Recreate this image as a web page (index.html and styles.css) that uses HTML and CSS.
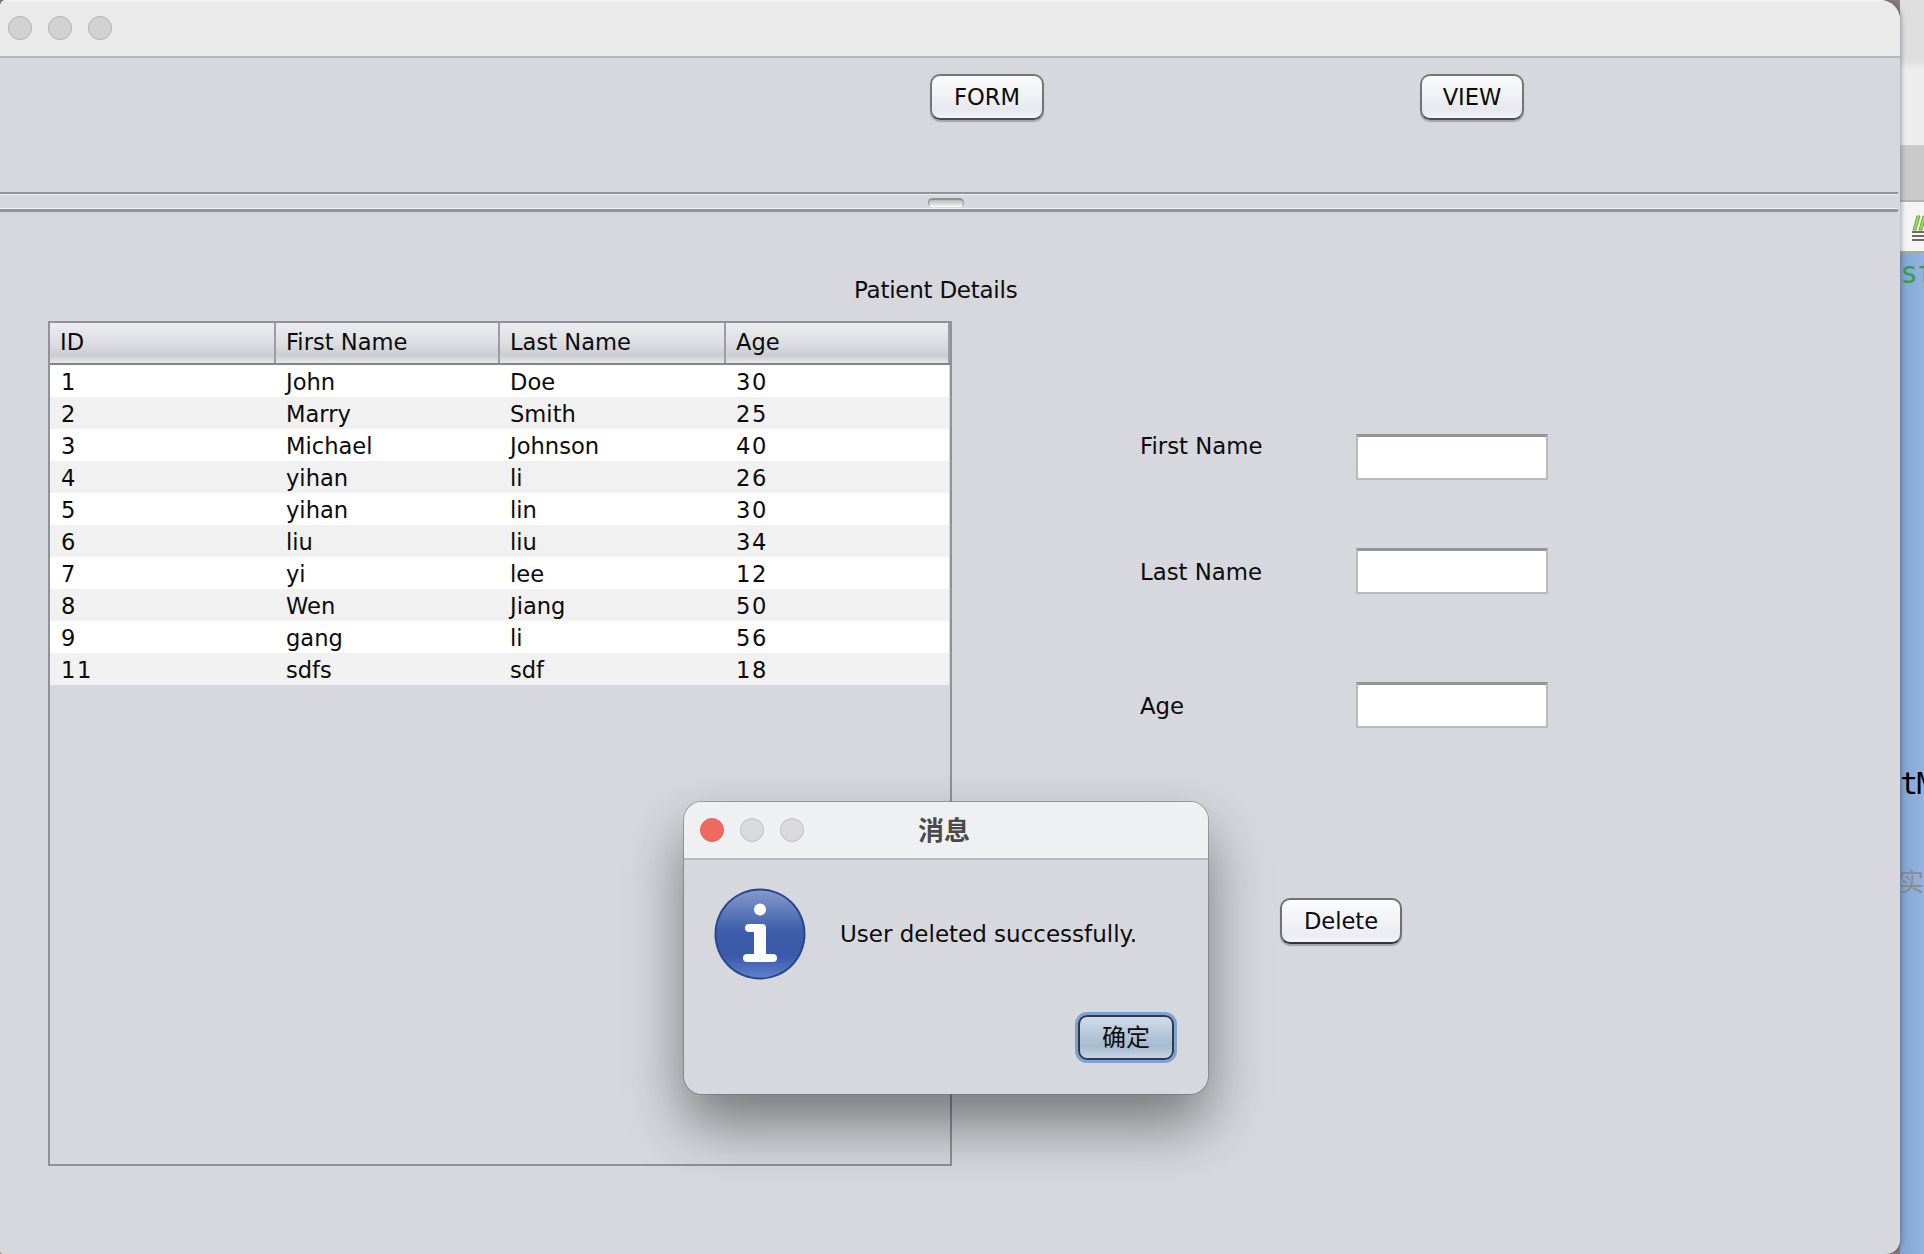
FILE: index.html
```html
<!DOCTYPE html>
<html lang="en">
<head>
<meta charset="utf-8">
<title>Patient Details</title>
<link rel="stylesheet" href="styles.css">
</head>
<body>
<div class="screen">
  <main class="window">
    <header class="titlebar">
      <span class="light"></span><span class="light"></span><span class="light"></span>
    </header>
    <nav class="toolbar">
      <button class="btn btn-form">FORM</button>
      <button class="btn btn-view">VIEW</button>
    </nav>
    <div class="splitter"><span class="grip"></span></div>
    <section class="panel">
      <h1 class="panel-title">Patient Details</h1>
      <div class="panel-body">
        <div class="table-wrap">
          <table class="data">
            <thead><tr><th>ID</th><th>First Name</th><th>Last Name</th><th>Age</th></tr></thead>
            <tbody>
              <tr><td>1</td><td>John</td><td>Doe</td><td class="num">30</td></tr>
              <tr><td>2</td><td>Marry</td><td>Smith</td><td class="num">25</td></tr>
              <tr><td>3</td><td>Michael</td><td>Johnson</td><td class="num">40</td></tr>
              <tr><td>4</td><td>yihan</td><td>li</td><td class="num">26</td></tr>
              <tr><td>5</td><td>yihan</td><td>lin</td><td class="num">30</td></tr>
              <tr><td>6</td><td>liu</td><td>liu</td><td class="num">34</td></tr>
              <tr><td>7</td><td>yi</td><td>lee</td><td class="num">12</td></tr>
              <tr><td>8</td><td>Wen</td><td>Jiang</td><td class="num">50</td></tr>
              <tr><td>9</td><td>gang</td><td>li</td><td class="num">56</td></tr>
              <tr><td class="num">11</td><td>sdfs</td><td>sdf</td><td class="num">18</td></tr>
            </tbody>
          </table>
        </div>
        <form class="form">
          <div class="field field-first"><label class="label">First Name</label><div class="input"></div></div>
          <div class="field field-last"><label class="label">Last Name</label><div class="input"></div></div>
          <div class="field field-age"><label class="label">Age</label><div class="input"></div></div>
          <button type="button" class="btn btn-delete">Delete</button>
        </form>
      </div>
    </section>
  </main>
  <aside class="behind">
    <div class="behind-tabs"></div>
    <div class="behind-head"></div>
    <div class="behind-tool">
      <svg class="tool-icon" width="12" height="28" viewBox="0 0 12 28">
        <path d="M1 15 5 1h3L4 15zM7 15l4-14h3l-4 14z" fill="#9ddb5e" stroke="#6fa83f"/>
        <path d="M0 17h12M0 21h12M0 25h12" stroke="#6a6a6a" stroke-width="2"/>
      </svg>
    </div>
    <div class="behind-code">
      <span class="code code-green">sf</span>
      <span class="code code-black">tM</span>
      <span class="code-cjk">实</span>
    </div>
  </aside>
  <div class="dialog">
    <header class="dialog-title">
      <span class="light light-red"></span><span class="light light-soft"></span><span class="light light-soft"></span>
      <span class="dialog-name">消息</span>
    </header>
    <div class="dialog-body">
      <svg class="info" width="92" height="92" viewBox="0 0 92 92">
        <defs>
          <linearGradient id="ball" x1="0" y1="0" x2="0" y2="1">
            <stop offset="0" stop-color="#8399cb"/>
            <stop offset=".48" stop-color="#3c5ca9"/>
            <stop offset=".75" stop-color="#3a5aa9"/>
            <stop offset="1" stop-color="#5f80d0"/>
          </linearGradient>
        </defs>
        <circle cx="46" cy="46" r="45.5" fill="#27468f"/>
        <circle cx="46" cy="46" r="43.6" fill="url(#ball)"/>
        <circle cx="46" cy="21.5" r="6" fill="#fff"/>
        <path d="M35 36h13a4 4 0 0 1 4 4v26h7a4 4 0 0 1 0 8H33a4 4 0 0 1 0-8h7V44h-5a4 4 0 0 1 0-8z" fill="#fff"/>
      </svg>
      <p class="dialog-msg">User deleted successfully.</p>
    </div>
    <footer class="dialog-foot"><button class="btn-ok">确定</button></footer>
  </div>
</div>
</body>
</html>
```
FILE: styles.css
```css
* { box-sizing: border-box; }
html, body { margin: 0; padding: 0; }
body {
  width: 1924px;
  height: 1254px;
  overflow: hidden;
  font-family: "DejaVu Sans", "Noto Sans CJK SC", sans-serif;
  color: #0b0b0b;
}
.screen {
  position: relative;
  display: flex;
  width: 1924px;
  height: 1254px;
  background: #8d7d7b;
  overflow: hidden;
}

/* main window */
.window {
  position: relative;
  z-index: 1;
  flex: 0 0 1900px;
  height: 1254px;
  display: flex;
  flex-direction: column;
  background: #d7d8dd;
  border-radius: 6px 20px 14px 3px;
  box-shadow: 1px 0 5px rgba(40, 50, 70, .45);
  overflow: hidden;
}
.titlebar {
  flex: 0 0 58px;
  display: flex;
  align-items: center;
  gap: 16px;
  padding: 0 0 1px 8px;
  background: #eaeaea;
  border-top: 1px solid #f4f4f4;
  border-bottom: 2px solid #b4b4ba;
}
.light {
  width: 24px;
  height: 24px;
  border-radius: 50%;
  background: #d2d2d2;
  border: 1px solid #b2b2b2;
}
.toolbar {
  flex: 0 0 134px;
  display: flex;
  align-items: flex-start;
  padding-top: 16px;
}
.btn {
  height: 46px;
  padding: 1px 0 0;
  font: 22.6px/1 "DejaVu Sans", sans-serif;
  color: #0b0b0b;
  background: linear-gradient(#fbfbfc 0%, #eff0f3 50%, #e6e8ee 80%, #f2f3f6 100%);
  border: 2px solid #74767c;
  border-bottom-color: #4c4d52;
  border-radius: 10px;
  box-shadow: 0 2px 1px rgba(120, 122, 130, .55);
}
.btn-form { width: 114px; margin-left: 930px; }
.btn-view { width: 104px; margin-left: 376px; }
.splitter {
  flex: 0 0 20px;
  position: relative;
  margin-right: 2px;
  border-top: 2px solid #91949c;
  border-bottom: 3px solid #91949c;
  box-shadow: inset 0 1px 0 #eceef1, inset 0 -1px 0 #f1f2f4;
}
.grip {
  position: absolute;
  left: 928px;
  top: 4px;
  width: 36px;
  height: 9px;
  background: linear-gradient(#b9bbc2, #eceded);
  border: 1px solid #8f9199;
  border-top-width: 2px;
  border-bottom-color: #fafafb;
  border-radius: 5px;
}
.panel {
  flex: 1;
  display: flex;
  flex-direction: column;
  padding-top: 63px;
}
.panel-title {
  margin: 0 0 16px 854px;
  font: 400 23px/30px "DejaVu Sans", sans-serif;
  letter-spacing: -.25px;
}
.panel-body {
  display: flex;
  padding-left: 48px;
}

/* table */
.table-wrap {
  flex: 0 0 904px;
  height: 845px;
  border: 2px solid #8f9299;
}
.data {
  width: 900px;
  table-layout: fixed;
  border-collapse: collapse;
  font-size: 22.6px;
}
.data th {
  height: 41px;
  padding: 0 0 3px 10px;
  font-weight: 400;
  text-align: left;
  background: linear-gradient(#ecedf0 0%, #dddee2 50%, #cbccd1 82%, #e3e4e7 96%, #e3e4e7 100%);
  border-right: 2px solid #9a9ca4;
  border-bottom: 2px solid #82858e;
}
.data th:nth-child(1) { width: 225px; }
.data th:nth-child(2) { width: 224px; }
.data th:nth-child(3) { width: 226px; }
.data td {
  height: 32px;
  padding: 2px 0 0 11px;
  line-height: 30px;
  white-space: nowrap;
}
.data .num { letter-spacing: 1.6px; }
.data tbody tr:nth-child(odd) { background: #fff; }
.data tbody tr:nth-child(even) { background: #f1f1f1; }

/* form */
.form {
  display: flex;
  flex-direction: column;
  align-items: flex-start;
  padding: 113px 0 0 188px;
}
.field {
  display: flex;
  align-items: flex-start;
  width: 408px;
}
.field-last { margin-top: 68px; }
.field-age { margin-top: 88px; }
.label {
  flex: 0 0 216px;
  font-size: 22.8px;
  line-height: 30px;
}
.field-first .label { margin-top: -3px; }
.field-last .label { margin-top: 9px; }
.field-age .label { margin-top: 9px; }
.input {
  flex: 0 0 192px;
  height: 46px;
  background: #fff;
  border: 2px solid #b9babd;
  border-top: 3px solid #949599;
}
.btn-delete {
  width: 122px;
  height: 46px;
  margin: 170px 0 0 140px;
  border-color: #6f7177;
  border-bottom-color: #33343a;
  background: linear-gradient(#fbfbfc 0%, #f2f3f6 50%, #e9ecf2 85%, #f4f5f8 100%);
}

/* what lies behind the window */
.behind {
  flex: 0 0 24px;
  display: flex;
  flex-direction: column;
  height: 1254px;
  overflow: hidden;
}
.behind-tabs {
  flex: 0 0 145px;
  background: linear-gradient(#dedede 0, #dedede 60px, #ededed 70px, #ededed 100%);
}
.behind-head {
  flex: 0 0 57px;
  background: #c9c9c9;
  border-bottom: 2px solid #b0b0b0;
}
.behind-tool {
  flex: 0 0 51px;
  padding: 13px 0 0 12px;
  background: #f4f4f4;
  border-bottom: 2px solid #a8a8a8;
}
.tool-icon { display: block; overflow: hidden; }
.behind-code {
  flex: 1;
  display: flex;
  flex-direction: column;
  align-items: flex-start;
  background: linear-gradient(90deg, #82a4d2, #93b4e0);
  white-space: nowrap;
}
.code { font: 30px/34px "DejaVu Sans Mono", monospace; letter-spacing: -1.5px; }
.code-green { margin-top: 3px; color: #3f9a52; }
.code-black { margin-top: 477px; color: #000; }
.code-cjk {
  margin: 64px 0 0 -1px;
  font: 25px/30px "Noto Sans CJK SC", sans-serif;
  color: #8b8b8f;
}

/* message dialog */
.dialog {
  position: absolute;
  z-index: 2;
  left: 684px;
  top: 802px;
  width: 524px;
  height: 292px;
  display: flex;
  flex-direction: column;
  background: #d7d8dd;
  border-radius: 18px;
  box-shadow: 0 0 0 1px rgba(110, 110, 115, .55), 0 30px 60px rgba(0, 0, 0, .45);
  overflow: hidden;
}
.dialog-title {
  position: relative;
  flex: 0 0 58px;
  display: flex;
  align-items: center;
  gap: 16px;
  padding-left: 16px;
  background: #eff0f2;
  border-bottom: 2px solid #b9babf;
}
.light-red { background: #ee6a5f; border-color: #e6635a; }
.light-soft { background: #dadada; border-color: #bdbdbd; }
.dialog-name {
  position: absolute;
  left: 0;
  right: 4px;
  top: 12px;
  text-align: center;
  font: 700 26px/30px "Noto Sans CJK SC", sans-serif;
  color: #4a4a4a;
}
.dialog-body {
  flex: 1;
  display: flex;
  align-items: flex-start;
  gap: 34px;
  padding: 28px 0 0 30px;
}
.info { flex: none; }
.dialog-msg {
  margin: 31px 0 0;
  font-size: 23px;
  line-height: 30px;
  white-space: nowrap;
}
.dialog-foot {
  display: flex;
  justify-content: flex-end;
  padding: 0 34px 34px 0;
}
.btn-ok {
  width: 96px;
  height: 45px;
  padding: 0 0 3px;
  font: 24px/1 "Noto Sans CJK SC", sans-serif;
  color: #0b0b0b;
  background: linear-gradient(#d0dce9 0%, #b8c8da 40%, #a7bace 70%, #c6d5e6 100%);
  border: 2px solid #2d3950;
  border-radius: 9px;
  box-shadow: 0 0 0 3px #7ea3cf;
}
```
